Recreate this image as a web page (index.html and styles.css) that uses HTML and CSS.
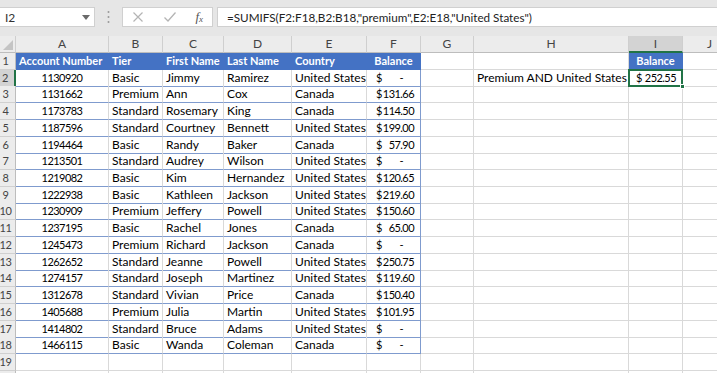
FILE: index.html
```html
<!DOCTYPE html>
<html lang="en">
<head>
    <meta charset="UTF-8">
    <meta name="viewport" content="width=device-width, initial-scale=1.0">
    <title>SUMIFS - Premium AND United States</title>
    <link rel="stylesheet" href="styles.css">
</head>
<body>

    <div class="toolbar">
        <div class="namebox">
            <span>I2</span>
            <svg class="caret" width="8" height="5" viewBox="0 0 8 5"><path d="M0 0 L8 0 L4 5 Z" fill="#6a6a6a"/></svg>
        </div>
        <div class="grip">
            <svg width="3" height="14" viewBox="0 0 3 14"><circle cx="1.5" cy="2" r="1" fill="#9a9a9a"/><circle cx="1.5" cy="7" r="1" fill="#9a9a9a"/><circle cx="1.5" cy="12" r="1" fill="#9a9a9a"/></svg>
        </div>
        <div class="fx-buttons">
            <svg width="12" height="12" viewBox="0 0 12 12"><path d="M1.5 1.5 L10.5 10.5 M10.5 1.5 L1.5 10.5" stroke="#b4b4b4" stroke-width="1.2" fill="none"/></svg>
            <svg width="14" height="12" viewBox="0 0 14 12"><path d="M1.5 6.5 L5 10 L12.5 1.5" stroke="#b4b4b4" stroke-width="1.3" fill="none"/></svg>
            <span class="fx">f<sub>x</sub></span>
        </div>
        <div class="formula">=SUMIFS(F2:F18,B2:B18,"premium",E2:E18,"United States")</div>
    </div>

    <div class="sheet">
        <div class="row col-head">
            <div class="corner"><svg width="10" height="10" viewBox="0 0 10 10"><path d="M10 0 L10 10 L0 10 Z" fill="#c4c4c4"/></svg></div>
            <div>A</div><div>B</div><div>C</div><div>D</div><div>E</div><div>F</div><div>G</div><div>H</div><div class="active">I</div><div>J</div>
        </div>

        <div class="row">
            <div class="rh">1</div>
            <div class="th">Account Number</div><div class="th">Tier</div><div class="th">First Name</div><div class="th">Last Name</div><div class="th">Country</div><div class="th center">Balance</div>
            <div></div><div></div><div class="th center single">Balance</div><div></div>
        </div>
        <div class="row">
            <div class="rh active">2</div>
            <div class="td num">1130920</div><div class="td">Basic</div><div class="td">Jimmy</div><div class="td">Ramirez</div><div class="td">United States</div><div class="td money last"><span>$</span><span class="dash">-</span></div>
            <div></div><div class="label">Premium AND United States</div><div class="money selected"><span>$</span><span>252.55</span><i class="handle"></i></div><div></div>
        </div>
        <div class="row">
            <div class="rh">3</div>
            <div class="td num">1131662</div><div class="td">Premium</div><div class="td">Ann</div><div class="td">Cox</div><div class="td">Canada</div><div class="td money last"><span>$</span><span>131.66</span></div>
            <div></div><div></div><div></div><div></div>
        </div>
        <div class="row">
            <div class="rh">4</div>
            <div class="td num">1173783</div><div class="td">Standard</div><div class="td">Rosemary</div><div class="td">King</div><div class="td">Canada</div><div class="td money last"><span>$</span><span>114.50</span></div>
            <div></div><div></div><div></div><div></div>
        </div>
        <div class="row">
            <div class="rh">5</div>
            <div class="td num">1187596</div><div class="td">Standard</div><div class="td">Courtney</div><div class="td">Bennett</div><div class="td">United States</div><div class="td money last"><span>$</span><span>199.00</span></div>
            <div></div><div></div><div></div><div></div>
        </div>
        <div class="row">
            <div class="rh">6</div>
            <div class="td num">1194464</div><div class="td">Basic</div><div class="td">Randy</div><div class="td">Baker</div><div class="td">Canada</div><div class="td money last"><span>$</span><span>57.90</span></div>
            <div></div><div></div><div></div><div></div>
        </div>
        <div class="row">
            <div class="rh">7</div>
            <div class="td num">1213501</div><div class="td">Standard</div><div class="td">Audrey</div><div class="td">Wilson</div><div class="td">United States</div><div class="td money last"><span>$</span><span class="dash">-</span></div>
            <div></div><div></div><div></div><div></div>
        </div>
        <div class="row">
            <div class="rh">8</div>
            <div class="td num">1219082</div><div class="td">Basic</div><div class="td">Kim</div><div class="td">Hernandez</div><div class="td">United States</div><div class="td money last"><span>$</span><span>120.65</span></div>
            <div></div><div></div><div></div><div></div>
        </div>
        <div class="row">
            <div class="rh">9</div>
            <div class="td num">1222938</div><div class="td">Basic</div><div class="td">Kathleen</div><div class="td">Jackson</div><div class="td">United States</div><div class="td money last"><span>$</span><span>219.60</span></div>
            <div></div><div></div><div></div><div></div>
        </div>
        <div class="row">
            <div class="rh">10</div>
            <div class="td num">1230909</div><div class="td">Premium</div><div class="td">Jeffery</div><div class="td">Powell</div><div class="td">United States</div><div class="td money last"><span>$</span><span>150.60</span></div>
            <div></div><div></div><div></div><div></div>
        </div>
        <div class="row">
            <div class="rh">11</div>
            <div class="td num">1237195</div><div class="td">Basic</div><div class="td">Rachel</div><div class="td">Jones</div><div class="td">Canada</div><div class="td money last"><span>$</span><span>65.00</span></div>
            <div></div><div></div><div></div><div></div>
        </div>
        <div class="row">
            <div class="rh">12</div>
            <div class="td num">1245473</div><div class="td">Premium</div><div class="td">Richard</div><div class="td">Jackson</div><div class="td">Canada</div><div class="td money last"><span>$</span><span class="dash">-</span></div>
            <div></div><div></div><div></div><div></div>
        </div>
        <div class="row">
            <div class="rh">13</div>
            <div class="td num">1262652</div><div class="td">Standard</div><div class="td">Jeanne</div><div class="td">Powell</div><div class="td">United States</div><div class="td money last"><span>$</span><span>250.75</span></div>
            <div></div><div></div><div></div><div></div>
        </div>
        <div class="row">
            <div class="rh">14</div>
            <div class="td num">1274157</div><div class="td">Standard</div><div class="td">Joseph</div><div class="td">Martinez</div><div class="td">United States</div><div class="td money last"><span>$</span><span>119.60</span></div>
            <div></div><div></div><div></div><div></div>
        </div>
        <div class="row">
            <div class="rh">15</div>
            <div class="td num">1312678</div><div class="td">Standard</div><div class="td">Vivian</div><div class="td">Price</div><div class="td">Canada</div><div class="td money last"><span>$</span><span>150.40</span></div>
            <div></div><div></div><div></div><div></div>
        </div>
        <div class="row">
            <div class="rh">16</div>
            <div class="td num">1405688</div><div class="td">Premium</div><div class="td">Julia</div><div class="td">Martin</div><div class="td">United States</div><div class="td money last"><span>$</span><span>101.95</span></div>
            <div></div><div></div><div></div><div></div>
        </div>
        <div class="row">
            <div class="rh">17</div>
            <div class="td num">1414802</div><div class="td">Standard</div><div class="td">Bruce</div><div class="td">Adams</div><div class="td">United States</div><div class="td money last"><span>$</span><span class="dash">-</span></div>
            <div></div><div></div><div></div><div></div>
        </div>
        <div class="row">
            <div class="rh">18</div>
            <div class="td num">1466115</div><div class="td">Basic</div><div class="td">Wanda</div><div class="td">Coleman</div><div class="td">Canada</div><div class="td money last"><span>$</span><span class="dash">-</span></div>
            <div></div><div></div><div></div><div></div>
        </div>
        <div class="row">
            <div class="rh">19</div>
            <div></div><div></div><div></div><div></div><div></div><div></div><div></div><div></div><div></div><div></div>
        </div>
        <div class="row">
            <div class="rh"></div>
            <div></div><div></div><div></div><div></div><div></div><div></div><div></div><div></div><div></div><div></div>
        </div>
    </div>

</body>
</html>
```

FILE: styles.css
```css
* {
    margin: 0;
    padding: 0;
    box-sizing: border-box;
}

body {
    width: 717px;
    height: 373px;
    overflow: hidden;
    background: #ffffff;
    font-family: 'Lato', 'Noto Sans', Arial, sans-serif;
    font-size: 12px;
    color: #000;
}

/* formula bar */

.toolbar {
    display: flex;
    align-items: flex-start;
    height: 36px;
    padding-top: 7px;
    background-color: #e6e6e6;
}

.namebox {
    display: flex;
    align-items: center;
    justify-content: space-between;
    width: 95px;
    height: 20px;
    padding: 0 4px 0 5px;
    background: #fff;
    border: 1px solid #d0d0d0;
    border-left: none;
    color: #333;
    font-size: 12px;
}

.grip {
    display: flex;
    align-items: center;
    justify-content: center;
    width: 27px;
    height: 20px;
}

.fx-buttons {
    display: flex;
    align-items: center;
    justify-content: space-between;
    width: 91px;
    height: 20px;
    padding: 0 9px 0 9px;
    background: #fff;
    border: 1px solid #d0d0d0;
    margin-right: 4px;
}

.fx {
    font-family: 'Liberation Serif', serif;
    font-style: italic;
    font-size: 13px;
    color: #555;
}

.fx sub {
    font-size: 9px;
    vertical-align: -1px;
}

.formula {
    flex: 1;
    height: 20px;
    padding-left: 9px;
    background: #fff;
    border: 1px solid #d0d0d0;
    border-right: none;
    line-height: 18px;
    color: #222;
    font-size: 11.7px;
}

/* grid */

.sheet {
    margin-left: -4px;
}

.row {
    display: grid;
    grid-template-columns: 20px 93px 54px 61px 68px 75px 54px 53px 155px 54px 54px;
    height: 16.72px;
}

.row > div {
    border-right: 1px solid #d9d9d9;
    border-bottom: 1px solid #d9d9d9;
    white-space: nowrap;
    overflow: hidden;
    line-height: 16px;
    padding-left: 3px;
}

.col-head {
    height: 17px;
}

.col-head > div {
    background: #ececec;
    border-right: 1px solid #cfcfcf;
    border-bottom: 1px solid #bdbdbd;
    text-align: center;
    color: #444;
    padding-left: 0;
}

.col-head > div.corner {
    display: flex;
    align-items: flex-end;
    justify-content: flex-end;
    padding: 0 2px 2px 0;
}

.col-head > div.active {
    background: #d3d3d3;
    border-bottom: 2px solid #217346;
}

.row > div.rh {
    background: #ececec;
    border-right: 1px solid #bdbdbd;
    border-bottom: 1px solid #d0d0d0;
    text-align: center;
    color: #444;
    font-size: 11px;
    letter-spacing: -0.5px;
    padding-left: 0;
    overflow: visible;
}

.row > div.rh.active {
    background: #d3d3d3;
    border-right: 2px solid #217346;
}

/* table */

.row > div.th {
    background: #4472c4;
    color: #fff;
    font-weight: bold;
    font-size: 11px;
    border-right-color: #4472c4;
    border-bottom-color: #4472c4;
}

.row > div.th.center {
    text-align: center;
    padding-left: 0;
}

.row > div.td {
    border-bottom: 1px solid #7f9bce;
}

.row > div.num {
    text-align: center;
    padding-left: 0;
    font-size: 11px;
    letter-spacing: -0.55px;
}

.row > div.money {
    display: flex;
    justify-content: space-between;
    padding: 0 6px 0 9px;
    font-size: 11px;
    letter-spacing: -0.55px;
}

.row > div.last {
    border-right: 1px solid #7f9bce;
}

.dash {
    padding-right: 11px;
}

.row > div.label {
    padding-left: 3px;
}

.row > div.selected {
    position: relative;
    overflow: visible;
    border: 2px solid #217346;
    margin: -1px 0 0 -1px;
    padding: 0 5px 0 6px;
    line-height: 14px;
}

.handle {
    position: absolute;
    right: -4px;
    bottom: -4px;
    width: 5px;
    height: 5px;
    background: #217346;
    border: 1px solid #fff;
}
```
